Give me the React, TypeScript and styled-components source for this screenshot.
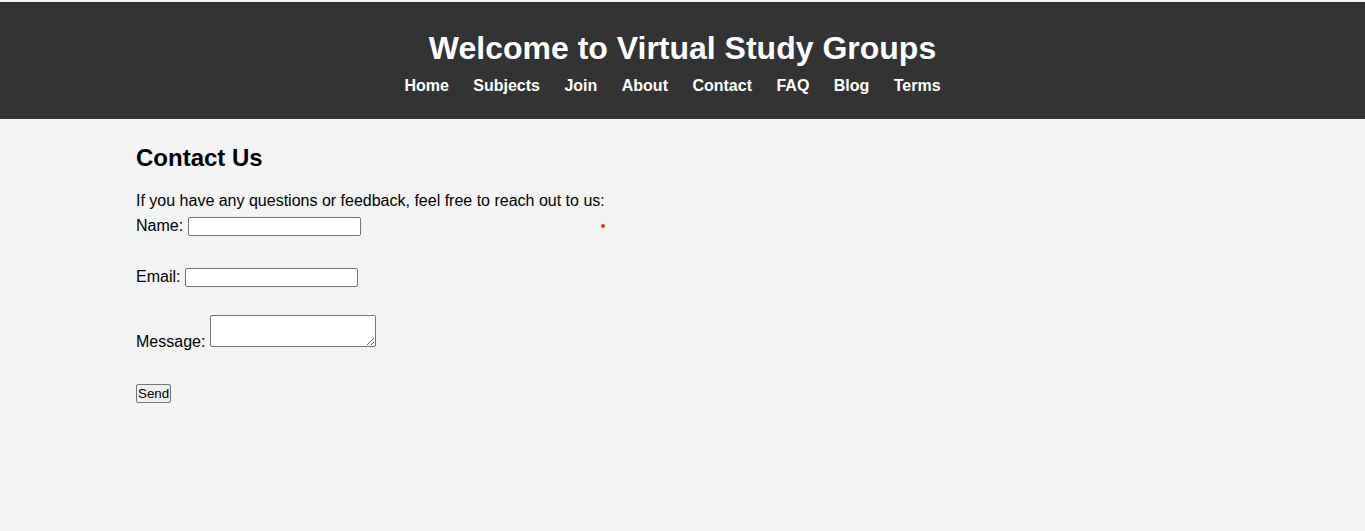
import React from "react";
import styled, { createGlobalStyle } from "styled-components";

const GlobalStyle = createGlobalStyle`
  html, body {
    margin: 0;
    padding: 0;
  }
  body {
    background: #f4f4f4;
    padding-top: 2px;
    font-family: "Liberation Sans", Arial, sans-serif;
    font-size: 16px;
    line-height: normal;
    color: #000;
  }
`;

const Header = styled.header`
  background: #333;
  color: #fff;
  text-align: center;
  padding: 27.5px 0 24.3px;
`;

const Title = styled.h1`
  margin: 0 0 10px;
  font-size: 32px;
  font-weight: bold;
  line-height: normal;
`;

const Nav = styled.nav`
  line-height: normal;
`;

const NavLink = styled.a`
  color: #fff;
  text-decoration: none;
  font-weight: bold;
  font-size: 16px;
  margin-right: 20px;
`;

const Main = styled.main`
  width: calc(80% + 1px);
  margin: 0 auto;
  padding-top: 0.1px;
`;

const Heading = styled.h2`
  font-size: 24px;
  font-weight: bold;
  line-height: normal;
  margin: 24.8px 0 19.9px;
`;

const Intro = styled.p`
  margin: 0 0 7.6px;
`;

const Form = styled.form`
  margin: 0;
`;

const FieldRow = styled.div<{ $top: number }>`
  position: relative;
  margin-top: ${(p) => p.$top}px;
`;

const Label = styled.label`
  font-size: 16px;
`;

const TextInput = styled.input`
  box-sizing: border-box;
  width: 173px;
  height: 19px;
  margin: 0;
  padding: 1px 2px;
  border: 1px solid #767676;
  border-radius: 2px;
  background: #fff;
  font-family: "Liberation Sans", Arial, sans-serif;
  font-size: 13.33px;
`;

const MessageArea = styled.textarea`
  box-sizing: border-box;
  width: 166px;
  height: 32px;
  margin: 0;
  padding: 2px;
  border: 1px solid #767676;
  border-radius: 2px;
  background: #fff;
  font-family: "Liberation Mono", monospace;
  font-size: 13.33px;
  vertical-align: baseline;
`;

const SendButton = styled.button`
  display: block;
  box-sizing: border-box;
  height: 19px;
  margin: 0;
  padding: 0 1px;
  border: 1px solid #767676;
  border-radius: 2px;
  background: #efefef;
  color: #000;
  font-family: "Liberation Sans", Arial, sans-serif;
  font-size: 13.33px;
  line-height: 15px;
`;

const Dot = styled.span`
  position: absolute;
  left: 465px;
  top: 6.4px;
  width: 4px;
  height: 4px;
  border-radius: 50%;
  background: #ee2a2a;
`;

const links = ["Home", "Subjects", "Join", "About", "Contact", "FAQ", "Blog", "Terms"];

export default function App() {
  return (
    <>
      <GlobalStyle />
      <Header>
        <Title>Welcome to Virtual Study Groups</Title>
        <Nav>
          {links.map((l, i) => (
            <React.Fragment key={l}>
              <NavLink href="#">{l}</NavLink>
              {i < links.length - 1 ? " " : ""}
            </React.Fragment>
          ))}
        </Nav>
      </Header>
      <Main>
        <Heading>Contact Us</Heading>
        <Intro>If you have any questions or feedback, feel free to reach out to us:</Intro>
        <Form onSubmit={(e) => e.preventDefault()}>
          <FieldRow $top={0}>
            <Label htmlFor="name">Name:</Label> <TextInput id="name" type="text" />
            <Dot />
          </FieldRow>
          <FieldRow $top={31.4}>
            <Label htmlFor="email">Email:</Label> <TextInput id="email" type="email" />
          </FieldRow>
          <FieldRow $top={28.1}>
            <Label htmlFor="message">Message:</Label> <MessageArea id="message" />
          </FieldRow>
          <FieldRow $top={33.3}>
            <SendButton type="submit">Send</SendButton>
          </FieldRow>
        </Form>
      </Main>
    </>
  );
}
